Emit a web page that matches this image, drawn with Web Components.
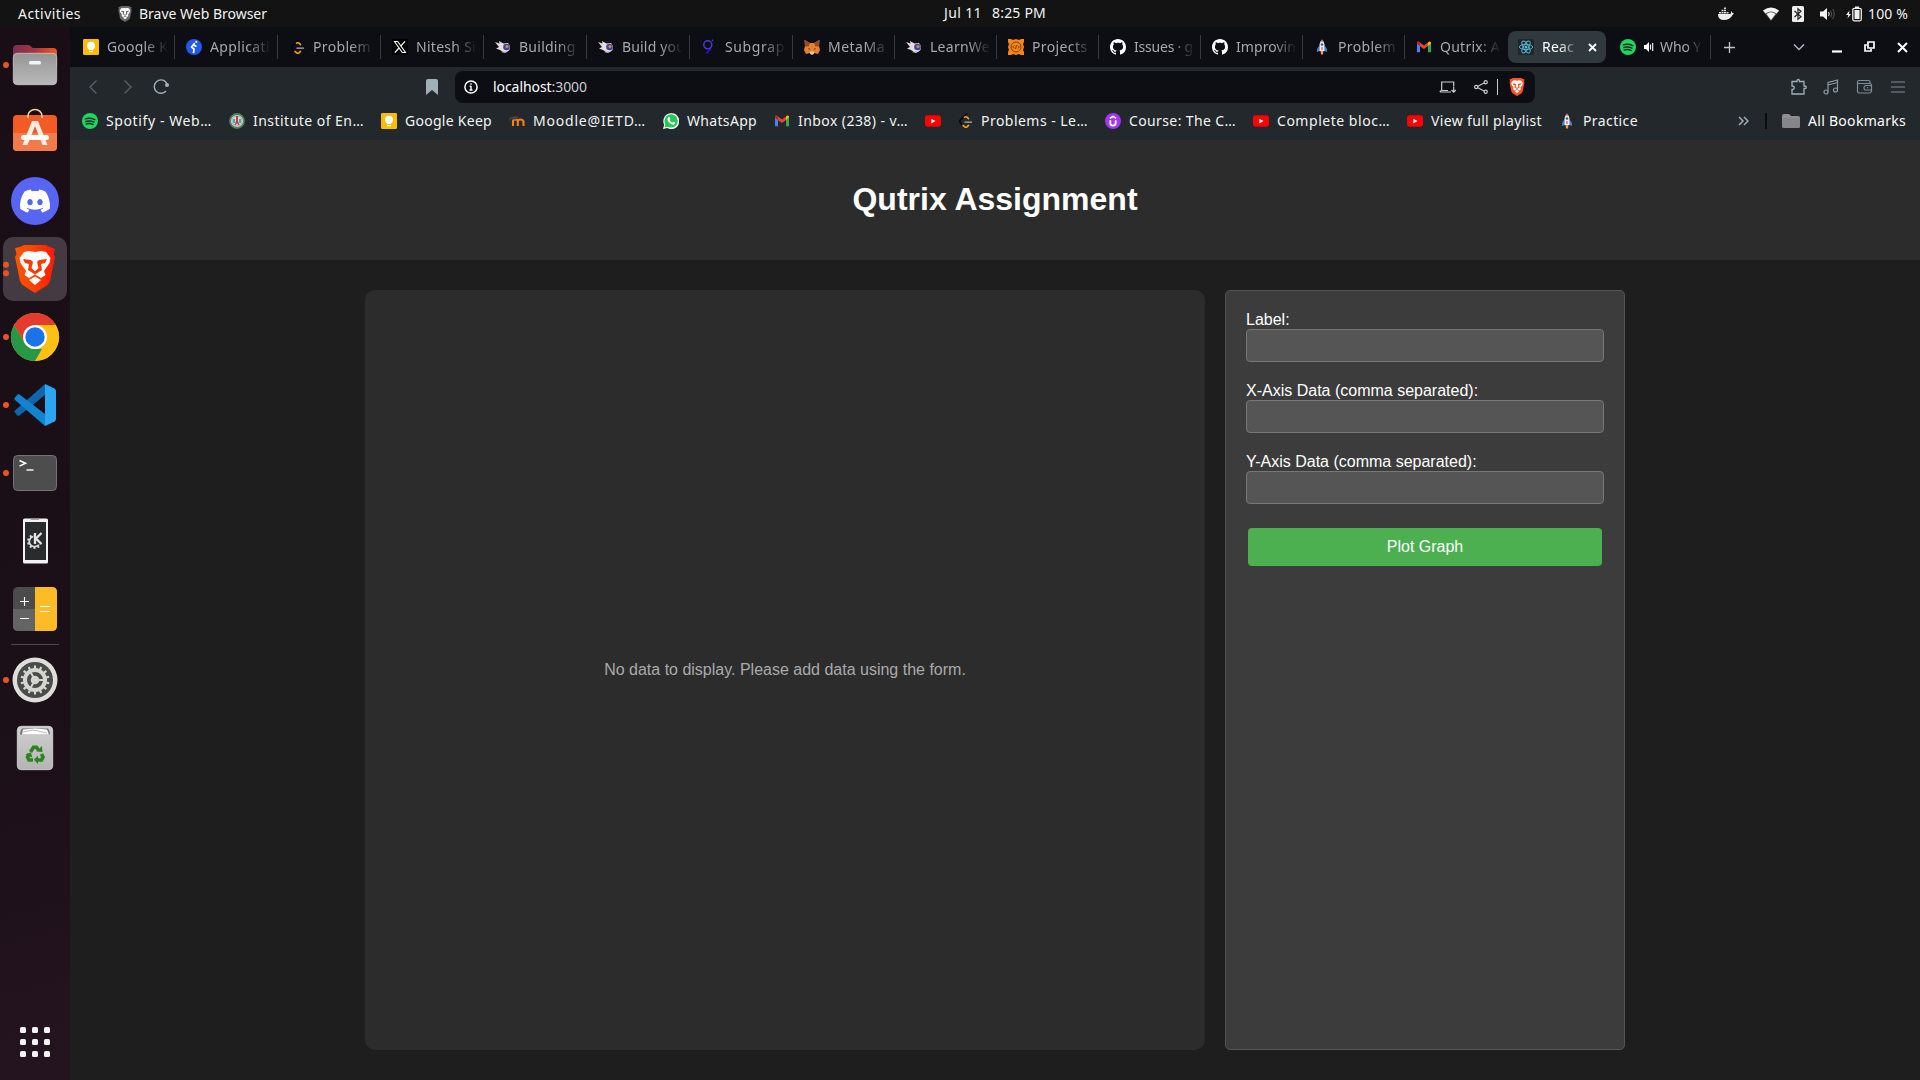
<!DOCTYPE html>
<html lang="en">
<head>
<meta charset="utf-8">
<title>React App</title>
<style>
html,body{margin:0;height:100%;background:#1f1f1f;overflow:hidden}
body{font-family:"Noto Sans","Open Sans",sans-serif;font-size:14px;color:#fff}
</style>
</head>
<body>
<desktop-screen></desktop-screen>
<script>
const svg=(w,h,body,vb)=>`<svg width="${w}" height="${h}" viewBox="${vb||`0 0 ${w} ${h}`}" fill="none" style="display:block;flex:none">${body}</svg>`;
const LION='<path d="M15 13L20 12L24 10H46L50 12L55 14L53.500 19L55 22L50 46Q49 49 46 51L35 58L24 51Q21 49 20 46L15 22L16.500 19Z" fill="FILL"/><path d="M35 17L41 16L46 17L50.500 23L49.500 28L44 36L45.500 40L41 43L35 39.500L29 43L24.500 40L26 36L20.500 28L19.500 23L24 17L29 16Z" fill="#fff"/><path d="M23 24L31 25L33 27L31.500 33L35 36L38.500 33L37 27L39 25L47 24L45 28L41 29L42 35L35 39.500L28 35L29 29L25 28Z" fill="FILL"/><path d="M33.500 26.500h3L37.500 34L35 36L32.500 34Z" fill="#fff"/><path d="M29 45L35 41.500L41 45L35 50Z" fill="#fff"/>';
const CAT={
keep:'<rect width="16" height="16" rx="1.300" fill="#fbbc04"/><circle cx="8" cy="6.800" r="4" fill="#fff"/><path d="M6 10h4v1H6zM6 11.800h4v1.400H6z" fill="#fff"/><path d="M6 11h4v.6H6z" fill="#fbbc04"/>',
app:'<circle cx="8" cy="8" r="8" fill="#2557e8"/><circle cx="10.300" cy="2.800" r="1.100" fill="#fff"/><path d="M8.800 4L5.500 8L8 10L7.500 14.200M7.500 6L10.500 7.500" stroke="#fff" stroke-width="1.700" stroke-linejoin="round"/>',
leet:'<path d="M9.500 1L3.500 6.800Q2 8.300 3.500 10L6 12.500" stroke="#050505" stroke-width="1.500" stroke-linecap="round"/><path d="M7.500 4.200Q8.800 3.300 10 4.200L11.500 5.600M6 12.300L8 14Q9 14.600 10 13.800L11.500 12.400" stroke="#ffa116" stroke-width="1.600" stroke-linecap="round"/><path d="M8 9.200h6.500" stroke="#b3b3b3" stroke-width="1.300" stroke-linecap="round"/>',
x:'<rect width="16" height="16" fill="#000"/><path d="M2.500 2.500H5.700L13.500 13.500H10.300Z" stroke="#fff" stroke-width="1.100"/><path d="M13 2.300L8.800 7.200M7 9L2.800 13.700" stroke="#fff" stroke-width="1.200"/>',
bug:'<path d="M0 3L4.500 4.500L4 2L8.500 4.500L13 4L15 7L14.500 11L12 13H8L5 11L1 9.500L4 8Z" fill="#e6dcdf"/><circle cx="11.500" cy="8" r="3.300" fill="#41409a"/><circle cx="12" cy="7.500" r="1.600" fill="#b89358"/><path d="M6 13l3-1 3 1-2 1z" fill="#c8bec7"/>',
graph:'<circle cx="6.800" cy="5.800" r="4" stroke="#493be0" stroke-width="1.500"/><circle cx="11.600" cy="1.400" r=".8" fill="#5b33e7"/><path d="M9.500 10.500L5.500 14" stroke="#3712dd" stroke-width="1.600" stroke-linecap="round"/>',
fox:'<path d="M.5 1L6 4h4l5.500-3L15 7l1 4-2 4-3.500-1L9 15.500H7L5.500 14 2 15 0 11l1-4Z" fill="#e8812d"/><path d="M.5 1L6 4 4.500 7.500H1zM15.500 1L10 4l1.500 3.500H15z" fill="#974b25"/><path d="M5.500 13.500L7 12.500h2l1.500 1L9 15.500H7z" fill="#d8c9c0"/><path d="M4.500 9l2 1.200-2 .3zM11.500 9l-2 1.200 2 .3z" fill="#263447"/>',
puzzle:'<path d="M0 0h3l2 1 3-1 3 1 2-1h3v3l-1 2 1 3-1 3 1 2v3h-3l-2-1-3 1-3-1-2 1H0v-3l1-2-1-3 1-3-1-2z" fill="#ff8514"/><circle cx="8" cy="8" r="5" stroke="#663b18" stroke-width=".9"/><path d="M6.200 6.500L4.700 8l1.500 1.500M9.800 6.500L11.300 8 9.800 9.500M8.500 6l-1 4" stroke="#50300e" stroke-width=".9"/>',
git:'<path fill="#fff" d="M8 0C3.580 0 0 3.580 0 8c0 3.540 2.290 6.530 5.470 7.590.4.070.550-.170.550-.380 0-.190-.010-.820-.010-1.490-2.010.370-2.530-.490-2.690-.940-.090-.230-.480-.940-.820-1.130-.280-.150-.680-.520-.010-.530.630-.010 1.080.580 1.230.820.720 1.210 1.870.870 2.330.660.070-.520.280-.870.510-1.070-1.780-.200-3.640-.890-3.640-3.950 0-.870.310-1.590.820-2.150-.080-.200-.360-1.020.080-2.120 0 0 .670-.210 2.200.820.640-.180 1.320-.270 2-.270s1.360.090 2 .270c1.530-1.040 2.200-.820 2.200-.820.440 1.100.160 1.920.080 2.120.510.560.820 1.270.820 2.150 0 3.070-1.870 3.750-3.650 3.950.290.250.540.730.540 1.480 0 1.070-.010 1.930-.010 2.200 0 .210.150.460.550.380A8.010 8.010 0 0 0 16 8c0-4.420-3.580-8-8-8z"/>',
rocket:'<path d="M5 7L3 10v3l3-1zM11 7l2 3v3l-3-1z" fill="#377fdc"/><path d="M8 .5Q11.300 3 10.500 12h-5Q4.700 3 8 .5Z" fill="#e8eaf0"/><path d="M8 .5L6.300 2.500h3.400z" fill="#d93b4a"/><circle cx="8" cy="5.500" r="1.300" fill="#28639e"/><path d="M7.500 8h1v3h-1z" fill="#db3d42"/><path d="M6.500 12h3L9 15l-1 1-1-1z" fill="#ff9d20"/>',
gmail:'<path d="M1 3.500v9.800h3V6.500z" fill="#4285f4"/><path d="M12 6.500v6.800h3V3.500z" fill="#34a853"/><path d="M1 3.500Q1.500 2 3 2.700L8 6.500L12 3.400V7L8 10 2.200 6Q1 5.300 1 3.500Z" fill="#ea4335"/><path d="M12 3.400Q14 1.500 15 3.500 15 5 14 5.600L12 7z" fill="#fbbc04"/><path d="M1 3.500Q1 5 2 5.800L4 7.200V3.500Q2 1.600 1 3.500Z" fill="#c5221f"/>',
react:'<rect width="16" height="16" rx="1" fill="#20262c"/><g stroke="#57b9d4" stroke-width=".9"><ellipse cx="8" cy="8" rx="6.700" ry="2.600"/><ellipse cx="8" cy="8" rx="6.700" ry="2.600" transform="rotate(60 8 8)"/><ellipse cx="8" cy="8" rx="6.700" ry="2.600" transform="rotate(120 8 8)"/></g><circle cx="8" cy="8" r="1.500" fill="#57b9d4"/>',
spotify:'<circle cx="8" cy="8" r="8" fill="#1ed760"/><path d="M3.300 5.800Q8 4.300 12.800 6.600M3.800 8.500Q8 7.100 12 9.200M4.200 11Q8 9.900 11.200 11.600" stroke="#152e20" stroke-width="1.400" stroke-linecap="round"/>',
seal:'<circle cx="8" cy="8" r="7" fill="#ddd9cc" stroke="#4d8064" stroke-width="1.800"/><circle cx="8" cy="8" r="5" stroke="#a3a296" stroke-width=".8"/><path d="M7 3h2v5l1.500 4h-1.500L8 9.500 7 12H5.500L7 8z" fill="#a84646"/><path d="M4 6h2v4H4zM10 6h2v4h-2z" fill="#4ca2d0"/>',
moodle:'<path d="M4 13V8.500Q4 6.500 6.400 6.500T8.800 8.500V13M8.800 8.500Q9 6.500 11.400 6.500T14.500 8.500V13" stroke="#f98012" stroke-width="2.100"/><path d="M0 5l6-2 4 1-3.500 2.500L1 6v4" fill="#484340"/>',
whatsapp:'<path d="M0 16l1.200-4.200A8 8 0 1 1 4.200 15Z" fill="#fff"/><circle cx="8.100" cy="7.900" r="6.700" fill="#25c756"/><path d="M1.500 14.500l1-4 3 3z" fill="#25c756"/><path d="M5.300 4.200Q6.400 3.500 6.800 4.800L7.300 6 6.500 7Q7.500 9 9.500 9.700l.9-1L12.300 9.600Q12.200 11.500 10.500 11.700 7.500 11.800 5 8.300 3.800 6 5.300 4.200Z" fill="#fff"/>',
youtube:'<rect y="2.300" width="16" height="11.500" rx="2.800" fill="#f00"/><path d="M6.300 5.700v4.700L10.500 8z" fill="#fff"/>',
udemy:'<circle cx="8" cy="8" r="8" fill="#a435f0"/><path d="M5.300 7.300V10Q5.300 12.700 8 12.700T10.700 10V7.300" stroke="#fff" stroke-width="1.800"/><path d="M4.800 5.400L8 3.400l3.200 2" stroke="#fff" stroke-width="1.600"/>',
lion:LION.replaceAll('FILL','#fb542b')
};
const ico=(n)=>n==='lion'?svg(18,18,CAT.lion,'11 10 48 48'):svg(16,16,CAT[n]);
const define=(name,css,html,after)=>customElements.define(name,class extends HTMLElement{
  connectedCallback(){
    if(this.shadowRoot)return;
    this.attachShadow({mode:'open'}).innerHTML=`<style>*{box-sizing:border-box}${css}</style>${typeof html==='function'?html(this):html}`;
    if(after)after(this);
  }
});

/* A label whose tracking is adjusted to fill a given width. */
define('fit-text',':host{display:block;flex:none;white-space:nowrap;line-height:20px}span{display:inline-block}',
 '<span><slot></slot></span>',el=>{
  const w=+el.getAttribute('w'),s=el.shadowRoot.querySelector('span');
  el.style.width=w+'px';
  s.style.letterSpacing=((w-s.getBoundingClientRect().width)/el.textContent.length)+'px';
 });

define('top-bar',`:host{display:flex;height:27px;background:#131313;align-items:center;color:#f2f2f2;padding:0 12px 0 18px}
div{display:flex;align-items:center}.l{width:926px}.c{gap:10px;padding-bottom:2px}.r{flex:1;justify-content:flex-end}`,
`<div class="l"><fit-text w="63">Activities</fit-text><span style="width:36px"></span>${svg(16,16,LION.replaceAll('FILL','#686868'),'11 10 48 48')}<span style="width:6px"></span><fit-text w="128">Brave Web Browser</fit-text></div>
<div class="c"><fit-text w="38">Jul 11</fit-text><fit-text w="54">8:25 PM</fit-text></div>
<div class="r">
${svg(17,16,'<path d="M1 8h12.500l1-3 1 2 1.500.3-1.500 1.700Q13 14 7 14 1 14 1 8Z" fill="#eee"/><path d="M2 6h2v1.500H2zM4.500 6h2v1.500h-2zM7 6h2v1.500H7zM9.500 6h2v1.500h-2zM4.500 3.800h2v1.500h-2zM7 3.800h2v1.500H7zM7 1.500h2V3H7z" fill="#ddd"/>')}
<span style="width:28px"></span>${svg(18,16,'<path d="M1 5Q9-.500 17 5L9 15Z" fill="#555"/><path d="M1 4.500Q9-1.500 17 4.500L14.500 7.500Q9 3.500 3.500 7.500ZM4.500 8Q9 4.500 13.500 8L9 14Z" fill="#f2f2f2"/>')}
<span style="width:12px"></span>${svg(12,16,'<rect width="12" height="16" rx="1.500" fill="#eee"/><path d="M2.500 5L9 10.800 6 13.300V2.700L9 5.200 2.500 11" stroke="#222" stroke-width="1.200"/>')}
<span style="width:15px"></span>${svg(16,16,'<path d="M1 5.500h3L8 2v12L4 10.500H1z" fill="#f2f2f2"/><path d="M9.500 6Q11 8 9.500 10" stroke="#ddd" stroke-width="1.200"/><path d="M11.500 4.500Q14 8 11.500 11.500M13.500 3Q17 8 13.500 13" stroke="#555"/>')}
<span style="width:11px"></span>${svg(18,16,'<path d="M3.500 4.500L0 9h2.300L1.500 12.500 5 8H3z" fill="#eee"/><rect x="6.800" y="2.300" width="8.500" height="12.500" rx="1.500" stroke="#eee" stroke-width="1.300"/><path d="M9 .500h4v2H9zM8.500 4h5v9h-5z" fill="#eee"/>')}
<span style="width:4px"></span><fit-text w="40">100 %</fit-text></div>`);

define('dock-item',':host{display:block;width:70px;height:68px}',el=>{
  const n=+el.getAttribute('dots');
  let dots='';
  if(n===1)dots='<circle cx="6" cy="34" r="3" fill="#e95420"/>';
  if(n===2)dots='<circle cx="6" cy="29.700" r="3" fill="#e95420"/><circle cx="6" cy="38.300" r="3" fill="#e95420"/>';
  return svg(70,68,DOCK[el.getAttribute('name')]+dots);
});
const teeth=(cx,cy,r,n,w,h,c)=>Array.from({length:n},(_,i)=>`<rect x="${cx-w/2}" y="${cy-r-h}" width="${w}" height="${h+2}" fill="${c}" transform="rotate(${i*360/n} ${cx} ${cy})"/>`).join('');
const DOCK={
files:'<defs><linearGradient id="a"><stop stop-color="#77304f"/><stop offset=".5" stop-color="#a83440"/><stop offset="1" stop-color="#f4581f"/></linearGradient><linearGradient id="b" x2="0" y2="1"><stop stop-color="#969696"/><stop offset="1" stop-color="#b9b9b9"/></linearGradient></defs><path d="M13 18q0-4 4-4h11q2 0 3 1.500t3 1.500h19q4 0 4 4v15H13z" fill="url(#a)"/><rect x="13.300" y="22.300" width="43.400" height="31.400" rx="4" fill="url(#b)" stroke="#c9c9c9" stroke-width=".8"/><rect x="29" y="30" width="12" height="3.500" rx="1.500" fill="#f4f4f4"/>',
store:'<rect x="13" y="16" width="44" height="36" rx="4" fill="#f25b24"/><path d="M13 34h44v14q0 4-4 4H17q-4 0-4-4z" fill="#f37b4a"/><path d="M28 19v-2a7 6.500 0 0 1 14 0v2" stroke="#f3cfa2" stroke-width="1.500"/><path d="M32 22h6l9.500 24h-5L35 27l-7.500 19h-5z" fill="#fbede5"/><rect x="21" y="36" width="28" height="5" rx="2.500" fill="#fff"/>',
discord:'<circle cx="35" cy="34" r="24" fill="#5865f2"/><g transform="translate(20 19) scale(1.250)"><path fill="#fff" d="M20.317 4.370a19.791 19.791 0 00-4.885-1.515.074.074 0 00-.079.037c-.211.375-.445.865-.608 1.250-1.845-.276-3.680-.276-5.487 0-.164-.393-.406-.874-.618-1.250a.077.077 0 00-.079-.037 19.736 19.736 0 00-4.885 1.515.070.070 0 00-.032.028C.533 9.046-.319 13.580.099 18.058a.082.082 0 00.031.056c2.053 1.508 4.041 2.423 5.993 3.029a.078.078 0 00.084-.028c.462-.630.873-1.295 1.226-1.994a.076.076 0 00-.042-.106c-.653-.248-1.274-.550-1.872-.892a.077.077 0 01-.008-.128c.126-.094.252-.192.372-.291a.074.074 0 01.078-.011c3.928 1.793 8.180 1.793 12.061 0a.074.074 0 01.079.010c.120.099.246.198.373.292a.077.077 0 01-.007.128 12.299 12.299 0 01-1.873.891.077.077 0 00-.041.107c.360.698.772 1.363 1.225 1.993a.076.076 0 00.084.029c1.961-.607 3.950-1.522 6.002-3.029a.077.077 0 00.031-.055c.500-5.177-.838-9.674-3.549-13.660a.061.061 0 00-.031-.029zM8.020 15.331c-1.183 0-2.157-1.086-2.157-2.419 0-1.333.956-2.419 2.157-2.419 1.211 0 2.176 1.095 2.157 2.419 0 1.333-.956 2.419-2.157 2.419zm7.975 0c-1.183 0-2.157-1.086-2.157-2.419 0-1.333.955-2.419 2.157-2.419 1.211 0 2.176 1.095 2.157 2.419 0 1.333-.946 2.419-2.157 2.419z"/></g>',
brave:'<rect x="3" y="2" width="64" height="64" rx="10" fill="#443b42"/><defs><linearGradient id="l"><stop stop-color="#ff5500"/><stop offset=".4" stop-color="#ff4500"/><stop offset="1" stop-color="#ff1a00"/></linearGradient></defs>'+
 LION.replaceAll('FILL','url(#l)').replace('<path d="M23 24','<path style="fill:#ff3c00" d="M23 24'),
chrome:'<circle cx="35" cy="34" r="24" fill="#fbbc05"/><path d="M14.200 22A24 24 0 0 1 55.800 22H35L24.600 40z" fill="#e33b2e"/><path d="M14.200 22L24.600 40Q28 46 35 46H45.400L35 58A24 24 0 0 1 14.200 22Z" fill="#279847"/><path d="M35 58L45.400 40V22H55.800A24 24 0 0 1 35 58Z" fill="#fdc015"/><circle cx="35" cy="34" r="12" fill="#fff"/><circle cx="35" cy="34" r="9.700" fill="#1a73e8"/>',
code:'<path d="M14.500 41L17.500 44.500Q18.500 45 19.500 44.500L45 24V13L15 39.500Q14 40 14.500 41Z" fill="#0c67ad"/><path d="M14.500 27L17.500 23.500Q18.500 23 19.500 23.500L45 43V55L15 29Q14 28 14.500 27Z" fill="#1284cf"/><path d="M45 13L54.500 17.500Q56 18.500 56 20V48Q56 49.500 54.500 50.500L45 55Z" fill="#2aa6f2"/>',
term:'<rect x="13.500" y="16.500" width="43" height="35" rx="4" fill="#4d4d4d" stroke="#737373"/><path d="M19.500 21.500l6 2.800-6 2.800" stroke="#fff" stroke-width="1.500"/><path d="M26.500 31h7" stroke="#fff" stroke-width="1.400"/>',
phone:'<rect x="23" y="11.500" width="25" height="45" rx="1.500" fill="#f2f2f2"/><path d="M31 12.200h8" stroke="#999" stroke-width="1.400"/><rect x="25" y="15" width="21" height="38" fill="#292b2d"/>'+teeth(34.500,34.500,5.500,10,2,2,'#d8d8d8')+'<circle cx="34.500" cy="34.500" r="5.200" fill="#292b2d" stroke="#d8d8d8" stroke-width="1.800"/><path d="M33.300 25.500h9.200v12h-9.200z" fill="#292b2d"/><path d="M35 26v11M41.500 26l-5.500 5.500 5.500 5.500" stroke="#e4e4e4" stroke-width="2.300"/>',
calc:'<rect x="13" y="12" width="44" height="44" rx="5" fill="#4b4b4b"/><path d="M13 34h22v22H18q-5 0-5-5z" fill="#646464"/><path d="M35 12h17q5 0 5 5v34q0 5-5 5H35z" fill="#fdbc25"/><path d="M20 26.500h9M24.500 22v9M20 43.500h9M40 31.500h10M40 36.500h10" stroke="#fff" stroke-width="1.100"/>',
gear:'<circle cx="35" cy="34" r="22.500" fill="#dededb"/><circle cx="35" cy="34" r="18" fill="#4b4b4b"/>'+teeth(35,34,11.500,14,2.200,3,'#d4d4d0')+'<circle cx="35" cy="34" r="10" stroke="#d4d4d0" stroke-width="4"/><circle cx="35" cy="34" r="4.300" fill="#d4d4d0"/><path d="M35 34h9M35 34l-4.500-8M35 34l-4.500 8" stroke="#d4d4d0" stroke-width="2"/>',
trash:'<defs><linearGradient id="t" x2="0" y2="1"><stop stop-color="#d0d0d0"/><stop offset="1" stop-color="#b4b4b4"/></linearGradient></defs><rect x="17.300" y="12.300" width="35.400" height="43.400" rx="4" fill="url(#t)" stroke="#dcdcdc" stroke-width=".8"/><path d="M22 14.500h26q2 2 2 6H20q0-4 2-6z" fill="#757575"/><path d="M23 15.500l12-1 12 1 2 5H22z" fill="#fff"/><path d="M23 18l10-2 14 3" stroke="#aaa" stroke-width=".8"/><g stroke="#2c8420" stroke-width="3.600"><path d="M30.500 38l3-4.700h3l2 3"/><path d="M41.500 40l1.500 3-1.500 3H37.500"/><path d="M33 46h-4L27.500 43l1.700-3"/></g><path d="M36.500 37.500l6 .5-.6-6zM38 41.700v8.300l-4.200-4.200zM25.500 40.500l5.500-2 1.300 5z" fill="#2c8420"/>',
grid:[20,32,44].map(x=>[19,31,43].map(y=>`<rect x="${x}" y="${y}" width="6" height="6" rx="1.500" fill="#f4f2f2"/>`).join('')).join('')
};
define('app-dock',`:host{display:flex;flex-direction:column;width:70px;flex:none;padding-top:4px;background:linear-gradient(165deg,#190d16 0%,#1b0f18 65%,#241420 100%)}
hr{width:48px;height:1px;border:0;margin:1px auto;background:#4d474c;flex:none}.end{margin-top:auto;margin-bottom:4px}`,
`<dock-item name="files" dots="1"></dock-item><dock-item name="store"></dock-item><dock-item name="discord"></dock-item><dock-item name="brave" dots="2"></dock-item><dock-item name="chrome" dots="1"></dock-item><dock-item name="code" dots="1"></dock-item><dock-item name="term" dots="1"></dock-item><dock-item name="phone"></dock-item><dock-item name="calc"></dock-item><hr><dock-item name="gear" dots="1"></dock-item><dock-item name="trash"></dock-item><dock-item class="end" name="grid"></dock-item>`);

define('browser-tab',`:host{display:flex;flex:none;height:32px;align-items:center;padding-left:11px;color:#a7a8ab}
.t{margin-left:8px;width:64px;overflow:hidden;-webkit-mask-image:linear-gradient(90deg,#000 38px,transparent 61px)}
:host([sep]){border-right:1px solid #393a3c;height:24px}
:host([active]){background:#30393d;border-radius:8px;padding-left:10px;color:#fff}
:host([active]) .t{width:34px;-webkit-mask-image:linear-gradient(90deg,#000 17px,transparent 38px)}
:host([sound]) .t{width:42px;margin-left:6px;-webkit-mask-image:linear-gradient(90deg,#000 26px,transparent 42px)}
.x{margin-left:12px}`,
el=>`${ico(el.getAttribute('icon'))}${el.hasAttribute('sound')?'<span style="width:8px"></span>'+svg(10,12,'<path d="M0 4h2l3-3v10L2 8H0z" fill="#fff"/><path d="M6.500 3.500v5M8.700 2v8" stroke="#fff" stroke-width="1.100"/>'):''}<div class="t"><fit-text w="${el.getAttribute('w')}">${el.getAttribute('label')}</fit-text></div>${el.hasAttribute('active')?'<span class="x">'+svg(9,9,'<path d="M1 1l7 7M8 1l-7 7" stroke="#fff" stroke-width="1.800"/>')+'</span>':''}`,
el=>{el.style.width=el.getAttribute('size')+'px'});

const TABS=[['keep','Google K',61],['app','Applicati',60],['leet','Problem',58],['x','Nitesh Si',60],['bug','Building',56.5],['bug','Build you',63],['graph','Subgrap',60],['fox','MetaMa',57],['bug','LearnWe',60],['puzzle','Projects',55.5],['git','Issues · g',59],['git','Improvin',60],['rocket','Problem',58],['gmail','Qutrix: A',60]];
define('tab-strip',`:host{display:flex;height:40px;align-items:center;background:#0d0e14;padding:0 12px 0 2px}.g{flex:1}`,
TABS.map(([i,l,w],n)=>`<browser-tab ${n<13?'sep':''} icon="${i}" label="${l}" w="${w}" size="${n<7?103:n===13?101:102}"></browser-tab>`).join('')+
`<browser-tab active icon="react" label="Reac" w="32" size="98" style="margin-left:2px"></browser-tab><span style="width:3px"></span><browser-tab sound sep icon="spotify" label="Who Y" w="41" size="102"></browser-tab>
<span style="width:13px"></span>${svg(11,11,'<path d="M5.500 0v11M0 5.500h11" stroke="#c3c4c6" stroke-width="1.300"/>')}<span class="g"></span>
${svg(12,8,'<path d="M1 1.500L6 6.500l5-5" stroke="#a9b8c0" stroke-width="1.500"/>')}<span style="width:27px"></span>
${svg(11,12,'<path d="M0 10.500h10" stroke="#fff" stroke-width="2.200"/>')}<span style="width:21px"></span>
${svg(11,12,'<path d="M4 1h6v6H4zM3 4H1v6h6V8" stroke="#fff" stroke-width="1.700"/>')}<span style="width:22px"></span>
${svg(11,11,'<path d="M1 1l9 9M10 1l-9 9" stroke="#fff" stroke-width="2"/>')}`);

define('tool-bar',`:host{display:flex;height:40px;align-items:center;background:#22282b;padding:0 15px 0 18px}
.u{display:flex;align-items:center;width:1080px;height:32px;border-radius:8px;background:#0d0e14;padding:0 9px}.g{flex:1}`,
`${svg(10,16,'<path d="M8.500 1.500L2 8l6.500 6.500" stroke="#566269" stroke-width="1.400"/>')}<span style="width:25px"></span>
${svg(10,16,'<path d="M1.500 1.500L8 8l-6.500 6.500" stroke="#566269" stroke-width="1.400"/>')}<span style="width:20px"></span>
${svg(17,16,'<path d="M12.800 3A6.700 6.700 0 1 0 13 12" stroke="#9fb0b8" stroke-width="1.400"/><circle cx="14" cy="6" r="2.100" fill="#9fb0b8"/><path d="M12.500 2.700L14 5" stroke="#9fb0b8" stroke-width="1.400"/>')}
<span class="g"></span>${svg(12,16,'<path d="M0 2q0-2 2-2h8q2 0 2 2v14l-6-5-6 5z" fill="#9fb0b8"/>')}<span style="width:17px"></span>
<div class="u">${svg(14,14,'<circle cx="7" cy="7" r="6.100" stroke="#fff" stroke-width="1.500"/><path d="M7 6v4.500M7 3.300v1.500M5.700 6.300H7M5.500 10h3" stroke="#fff" stroke-width="1.400"/>')}<span style="width:15px"></span>
<fit-text w="94">localhost<span style="color:#c9cacc">:3000</span></fit-text><span class="g"></span>
${svg(17,14,'<path d="M12 12H1M2.700 10V2h12v4M1 12q0-1.500 1.700-1.500H9" stroke="#c9cacc" stroke-width="1.200"/><path d="M14.700 6.500v5.500M12.500 10l2.200 2.200L17 10" stroke="#c9cacc" stroke-width="1.200"/>')}<span style="width:18px"></span>
${svg(14,14,'<path d="M3.500 6.500l7-3.800M3.500 7.500l7 3.800" stroke="#c9cacc" stroke-width="1.100"/><g fill="#0d0e14" stroke="#c9cacc" stroke-width="1.200"><circle cx="2.200" cy="7" r="1.600"/><circle cx="11.700" cy="2.200" r="1.600"/><circle cx="11.700" cy="11.800" r="1.600"/></g>')}
<span style="width:9px"></span>${svg(1,16,'<path d="M.5 0v16" stroke="#c9cacc"/>')}<span style="width:10px"></span>${ico('lion')}</div>
<span style="width:255px"></span>
${svg(18,18,'<path d="M2 3.500h5V3q0-1.500 1.200-1.500T9.500 3v.500H14V8h.800q1.500 0 1.500 1.200t-1.500 1.300H14V16H2v-4.500h.800q1.500 0 1.500-1.700T2.800 8H2z" stroke="#9fb0b8" stroke-width="1.300"/>')}<span style="width:15px"></span>
${svg(16,16,'<path d="M5 13V3.500L14.500 1v9.500M5 6l9.500-2.500" stroke="#8b9aa3" stroke-width="1.200"/><circle cx="3" cy="13" r="2" stroke="#8b9aa3" stroke-width="1.200"/><circle cx="12.500" cy="11" r="2" stroke="#8b9aa3" stroke-width="1.200"/>')}<span style="width:17px"></span>
${svg(17,16,'<path d="M14 5V3q0-1.500-1.500-1.500H3Q1.500 1.500 1.500 3v9.500Q1.500 14 3 14h10.500q1.500 0 1.500-1.500M1.500 4.500h12Q15.500 4.500 15.500 6v7M9 11h6.500V6.500H9.500Q8 7 8 8.800T9 11ZM11 8.700h1" stroke="#7e8d96" stroke-width="1.200"/>')}<span style="width:18px"></span>
${svg(14,12,'<path d="M0 1h14M0 6h14M0 11h14" stroke="#7e8d96" stroke-width="1.200"/>')}`);

define('book-mark',`:host{display:flex;flex:none;align-items:center;gap:8px;margin-right:17px;color:#f2f3f3}:host([label=""]){margin-right:16px}`,
el=>ico(el.getAttribute('icon'))+(el.getAttribute('label')?`<fit-text w="${el.getAttribute('w')}">${el.getAttribute('label')}</fit-text>`:''));
const MARKS=[['spotify','Spotify - Web…',106],['seal','Institute of En…',111],['keep','Google Keep',87],['moodle','Moodle@IETD…',113],['whatsapp','WhatsApp',70],['gmail','Inbox (238) - v…',110],['youtube','',0],['leet','Problems - Le…',107],['udemy','Course: The C…',107],['youtube','Complete bloc…',113],['youtube','View full playlist',111],['rocket','Practice',55]];
define('bookmark-bar',`:host{display:flex;height:33px;align-items:center;background:#22282b;padding:0 14px 5px 12px}.g{flex:1}`,
MARKS.map(([i,l,w])=>`<book-mark icon="${i}" label="${l}" w="${w}"></book-mark>`).join('')+
`<span class="g"></span>${svg(11,10,'<path d="M1 1l4 4-4 4M6 1l4 4-4 4" stroke="#9fb0b8" stroke-width="1.500"/>')}<span style="width:16px"></span>${svg(2,16,'<path d="M1 0v16" stroke="#0b0c0f" stroke-width="2"/>')}<span style="width:15px"></span>
${svg(18,16,'<path d="M0 3q0-2 2-2h5l2 2h7q2 0 2 2v8q0 2-2 2H2q-2 0-2-2z" fill="#8e8e93"/><path d="M0 5h16q2 0 2 2v6q0 2-2 2H2q-2 0-2-2z" fill="#85858a"/>')}<span style="width:8px"></span><fit-text w="98">All Bookmarks</fit-text>`);

define('form-field',`:host{display:flex;flex-direction:column;margin-bottom:20px}label{line-height:18px}input{height:33px;width:100%;margin:0;background:#555;border:1px solid #777;border-radius:4px;padding:8px;color:#fff;outline:0}`,
'<label><slot></slot></label><input type="text">');
define('data-form',`:host{display:flex;flex-direction:column;width:400px;background:#3c3c3c;border:1px solid #555;border-radius:5px;padding:20px}
button{margin:4px 2px;height:38px;background:#4caf50;color:#fff;border:0;border-radius:4px;font:16px "Liberation Sans",sans-serif;padding:0}`,
'<form-field>Label:</form-field><form-field>X-Axis Data (comma separated):</form-field><form-field>Y-Axis Data (comma separated):</form-field><button>Plot Graph</button>');
define('graph-panel',`:host{display:flex;width:840px;background:#2c2c2c;border-radius:10px;align-items:center;justify-content:center;color:#aaa}`,'<slot></slot>');
define('web-page',`:host{display:flex;flex-direction:column;flex:1;background:#1e1e1e;font:16px "Liberation Sans",Arial,sans-serif;color:#fff}
header{display:flex;height:120px;flex:none;background:#2c2c2c;align-items:center;justify-content:center;padding-bottom:2px}h1{margin:0;font-size:32px;line-height:37px}
main{display:flex;flex:1;gap:20px;justify-content:center;padding:30px 0}`,
'<header><h1>Qutrix Assignment</h1></header><main><graph-panel>No data to display. Please add data using the form.</graph-panel><data-form></data-form></main>');
define('browser-window',':host{display:flex;flex-direction:column;flex:1;min-width:0}','<tab-strip></tab-strip><tool-bar></tool-bar><bookmark-bar></bookmark-bar><web-page></web-page>');
define('desktop-screen',':host{display:flex;flex-direction:column;width:1920px;height:1080px;overflow:hidden}.r{display:flex;flex:1;min-height:0}','<top-bar></top-bar><div class="r"><app-dock></app-dock><browser-window></browser-window></div>');
</script>
</body>
</html>
